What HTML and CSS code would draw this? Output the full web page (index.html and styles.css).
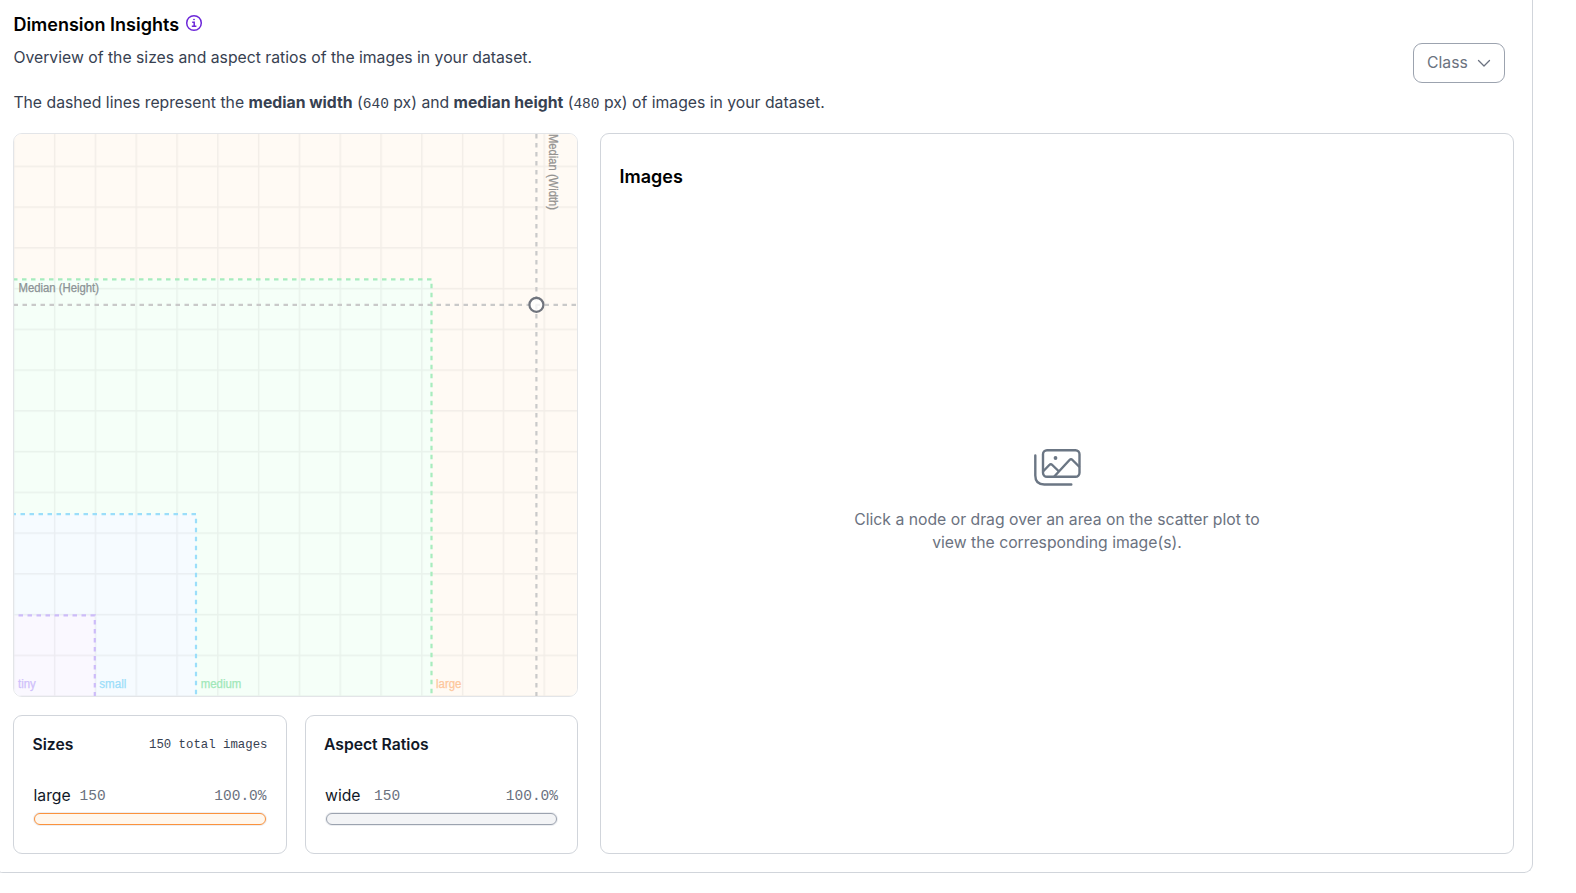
FILE: index.html
```html
<!DOCTYPE html>
<html lang="en">
<head>
<meta charset="utf-8">
<title>Dimension Insights</title>
<link rel="stylesheet" href="styles.css">
</head>
<body>
<section class="card">
  <header class="head">
    <div class="intro">
      <h2 class="title"><span>Dimension Insights</span>
        <svg class="info" viewBox="0 0 18 18" fill="none" stroke="#6d28d9" stroke-width="1.5"><circle cx="9" cy="9" r="7.3"/><path d="M7.2 8.2h2v4M6.8 12.3h4.6"/><circle cx="9" cy="5.5" r=".5" fill="#6d28d9" stroke-width=".8"/></svg>
      </h2>
      <p class="desc">Overview of the sizes and aspect ratios of the images in your dataset.</p>
      <p class="desc second">The dashed lines represent the <b>median width</b> (<span class="num">640</span> px) and <b>median height</b> (<span class="num">480</span> px) of images in your dataset.</p>
    </div>
    <button class="select"><span>Class</span><svg class="chev" viewBox="0 0 14 9" fill="none" stroke="#6b7280" stroke-width="1.3" stroke-linecap="round" stroke-linejoin="round"><path d="M1.5 1.5 7 7l5.500-5.500"/></svg></button>
  </header>
  <div class="body">
    <div class="left">
      <div class="plot">
        <svg class="chart" viewBox="14 134 563 562">
          <defs>
            <pattern id="grid" x="13.100" y="124.850" width="40.800" height="40.750" patternUnits="userSpaceOnUse"><path d="M0 .7H40.800M.7 0V40.750" stroke="#000" stroke-opacity=".05" stroke-width="1.400"/></pattern>
          </defs>
          <rect class="z-large" x="14" y="134" width="563" height="562"/>
          <rect class="z-medium" x="14" y="279.300" width="417.500" height="417"/>
          <rect class="z-small" x="14" y="514.200" width="182" height="182"/>
          <rect class="z-tiny" x="14" y="615.300" width="81" height="81"/>
          <rect x="14" y="134" width="563" height="562" fill="url(#grid)"/>
          <g class="dash">
            <path stroke="#a7ecbd" d="M13 279.300H431.500V697"/>
            <path stroke="#9bdefa" d="M11.500 514.200H196V697"/>
            <path stroke="#cdbcf9" d="M9.500 615.300H94.800V697" />
            <path stroke="#c9c9c9" d="M13.500 304.800H577"/>
            <path stroke="#c9c9c9" d="M536.400 134V697"/>
          </g>
          <circle cx="536.400" cy="304.800" r="7" fill="#fff" fill-opacity=".75" stroke="#70747d" stroke-width="2.200"/>
          <g class="labels">
            <text x="18.500" y="292" fill="#8b9295" stroke="#8b9295" textLength="80.500" lengthAdjust="spacingAndGlyphs">Median (Height)</text>
            <text transform="translate(549 134) rotate(90)" fill="#93918f" stroke="#93918f" textLength="76" lengthAdjust="spacingAndGlyphs">Median (Width)</text>
            <text x="18" y="688" fill="#cfc0fb" stroke="#cfc0fb" textLength="17.800" lengthAdjust="spacingAndGlyphs">tiny</text>
            <text x="99.300" y="688" fill="#9bdefa" stroke="#9bdefa" textLength="27" lengthAdjust="spacingAndGlyphs">small</text>
            <text x="200.800" y="688" fill="#a0e8b8" stroke="#a0e8b8" textLength="40.500" lengthAdjust="spacingAndGlyphs">medium</text>
            <text x="436" y="688" fill="#fdc79c" stroke="#fdc79c" textLength="25.500" lengthAdjust="spacingAndGlyphs">large</text>
          </g>
        </svg>
      </div>
      <div class="stats">
        <div class="stat">
          <div class="stat-head"><h3>Sizes</h3><span class="total">150 total images</span></div>
          <div class="row"><span class="name">large</span><span class="count">150</span><span class="pct">100.0%</span></div>
          <div class="bar bar-orange"></div>
        </div>
        <div class="stat">
          <div class="stat-head"><h3>Aspect Ratios</h3></div>
          <div class="row"><span class="name wide">wide</span><span class="count">150</span><span class="pct">100.0%</span></div>
          <div class="bar bar-gray"></div>
        </div>
      </div>
    </div>
    <div class="images">
      <h2 class="images-title">Images</h2>
      <div class="empty">
        <svg class="pics" viewBox="-1 0 50 40" fill="none" stroke="#6b7684" stroke-width="2.400" stroke-linecap="round" stroke-linejoin="round"><rect x="10" y="2.300" width="36.500" height="26.500" rx="4"/><path d="M2.300 7.500v20q0 9 9 9h27M10.500 23l5.800-6q1.500-1.500 3 0l6.200 6M21.500 28.300 36.500 12q1.500-1.500 3 0l6.500 6.500"/><circle cx="22.500" cy="10" r="1.900" fill="#6b7684" stroke="none"/></svg>
        <p class="hint">Click a node or drag over an area on the scatter plot to<br>view the corresponding image(s).</p>
      </div>
    </div>
  </div>
</section>
</body>
</html>
```
FILE: styles.css
```css
* { box-sizing: border-box; }
body { margin: 0; background: #fff; font-family: Inter, sans-serif; font-size: 15.760px; overflow: hidden; }
h2, h3, p { margin: 0; }
.card { width: 1539px; height: 873px; margin-left: -6px; border: 1px solid #d1d5db; border-top: 0; border-radius: 0 0 9px 9px; padding: 0 18px; }
.head { height: 133px; display: flex; justify-content: space-between; align-items: flex-start; }
.intro { padding-left: 0.400px; }
.title { display: flex; align-items: center; gap: 6px; height: 22px; margin-top: 13px; font-size: 18px; font-weight: 600; color: #000; }
.info { width: 18px; height: 18px; margin-top: -2px; }
.desc { height: 23px; line-height: 23px; margin-top: 11px; color: #374151; white-space: nowrap; }
.desc.second { margin-top: 22px; }
.desc b { font-weight: 700; }
.num, .total, .count, .pct { font-family: "Liberation Mono", monospace; }
.num { font-size: 14.500px; }
.select { display: flex; align-items: center; justify-content: space-between; width: 92px; height: 40px; margin: 43px 9px 0 0; padding: 0 13px 1px; background: #fff; border: 1px solid #9ca3af; border-radius: 9px; font: 15.760px Inter, sans-serif; color: #6b7280; }
.chev { width: 14px; height: 9px; margin-top: 1px; }
.body { display: flex; gap: 22px; height: 721px; }
.left { width: 565px; display: flex; flex-direction: column; gap: 18px; }
.plot { height: 564px; border: 1px solid #e3e5e8; border-radius: 9px; overflow: hidden; }
.chart { display: block; width: 563px; height: 562px; }
.z-large { fill: #fffaf4; }
.z-medium { fill: #f5fff8; }
.z-small { fill: #f6fbff; }
.z-tiny { fill: #faf8ff; }
.dash { fill: none; stroke-width: 2.200; stroke-dasharray: 4.500 4.500; }
.labels { font-family: "Liberation Sans", Arial, sans-serif; font-size: 12px; stroke-width: .25; }
.stats { display: flex; gap: 18px; height: 139px; }
.stat { flex: 1; border: 1px solid #d1d5db; border-radius: 9px; padding: 17px 18px 18px; }
.stat-head { display: flex; align-items: center; justify-content: space-between; height: 22px; }
.stat-head h3 { padding-left: 0.500px; font-size: 15.700px; font-weight: 600; color: #111827; }
.total { margin-top: 2px; font-size: 12.350px; color: #374151; }
.row { display: flex; align-items: center; height: 23px; margin-top: 29px; padding: 0 1px 0 1.500px; color: #111827; }
.name { width: 46px; }
.name.wide { width: 49px; }
.count, .pct { margin-top: 1px; font-size: 14.500px; color: #6b7280; }
.pct { margin-left: auto; }
.bar { height: 12px; margin: 6px 2px 0; border: 1px solid; border-radius: 6px; box-shadow: 0 0 0 1px #eceef1; }
.bar-orange { background: #fff7ed; border-color: #fb923c; }
.bar-gray { background: #f3f4f6; border-color: #9ca3af; }
.images { flex: none; width: 914px; border: 1px solid #d1d5db; border-radius: 9px; padding: 31px 18px; }
.images-title { padding-left: 0.500px; font-size: 18px; line-height: 23px; font-weight: 600; color: #000; }
.empty { display: flex; flex-direction: column; align-items: center; margin-top: 260px; }
.pics { width: 50px; height: 40px; }
.hint { margin-top: 20px; text-align: center; line-height: 23px; color: #6b7280; }
```
